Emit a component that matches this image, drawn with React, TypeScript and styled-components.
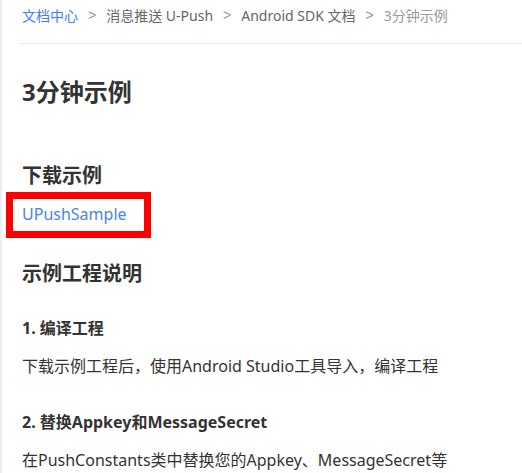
import React from "react";
import styled, { createGlobalStyle } from "styled-components";

const Global = createGlobalStyle`
  html, body { margin: 0; padding: 0; background: #fff; }
  body { font-family: "Noto Sans", "Noto Sans CJK SC", sans-serif; }
`;

const Page = styled.div`
  min-height: 473px;
  border-left: 2px solid #eeeef4;
  box-sizing: border-box;
  overflow: hidden;
`;

const Crumbs = styled.nav`
  display: flex;
  align-items: center;
  height: 30px;
  padding-left: 20px;
  font-size: 14px;
  color: #666;
`;

const Crumb = styled.span<{ $tone: "link" | "normal" | "current" }>`
  color: ${(p) => (p.$tone === "link" ? "#3f7ef8" : p.$tone === "current" ? "#999" : "#666")};
`;

const Sep = styled.span`
  color: #999;
  margin: 0 10px;
  font-family: "Liberation Sans", sans-serif;
`;

const Divider = styled.hr`
  border: 0;
  border-top: 1px solid #e8e8e8;
  margin: 13px 0 0 18px;
`;

const Content = styled.main`
  padding-left: 20px;
  color: #333;
`;

const Title = styled.h1`
  margin: 32px 0 0;
  font-size: 24px;
  line-height: 32px;
  font-weight: 700;
  color: #333;
`;

const H2 = styled.h2<{ $gap: number }>`
  margin: ${(p) => p.$gap}px 0 0;
  font-size: 20px;
  line-height: 28px;
  font-weight: 700;
  color: #333;
`;

const H3 = styled.h3<{ $gap: number }>`
  margin: ${(p) => p.$gap}px 0 0;
  font-size: 16px;
  line-height: 24px;
  font-weight: 700;
  color: #333;
`;

const Para = styled.p`
  margin: 14px 0 0;
  font-size: 16px;
  line-height: 24px;
  color: #333;
`;

const LinkLine = styled.div`
  position: relative;
  margin-top: 12px;
  font-size: 16px;
  line-height: 24px;
`;

const Link = styled.a`
  color: #4a82f6;
  text-decoration: none;
`;

const Highlight = styled.span`
  position: absolute;
  left: -16px;
  top: -10px;
  width: 145px;
  height: 46px;
  border: 7px solid #ff0000;
  box-sizing: border-box;
  pointer-events: none;
`;

export default function App() {
  return (
    <>
      <Global />
      <Page>
        <Crumbs>
          <Crumb $tone="link">文档中心</Crumb>
          <Sep>&gt;</Sep>
          <Crumb $tone="normal">消息推送 U-Push</Crumb>
          <Sep>&gt;</Sep>
          <Crumb $tone="normal">Android SDK 文档</Crumb>
          <Sep>&gt;</Sep>
          <Crumb $tone="current">3分钟示例</Crumb>
        </Crumbs>
        <Divider />
        <Content>
          <Title>3分钟示例</Title>
          <H2 $gap={54}>下载示例</H2>
          <LinkLine>
            <Link href="#">UPushSample</Link>
            <Highlight />
          </LinkLine>
          <H2 $gap={34}>示例工程说明</H2>
          <H3 $gap={28}>1. 编译工程</H3>
          <Para>下载示例工程后，使用Android Studio工具导入，编译工程</Para>
          <H3 $gap={32}>2. 替换Appkey和MessageSecret</H3>
          <Para>在PushConstants类中替换您的Appkey、MessageSecret等</Para>
        </Content>
      </Page>
    </>
  );
}
